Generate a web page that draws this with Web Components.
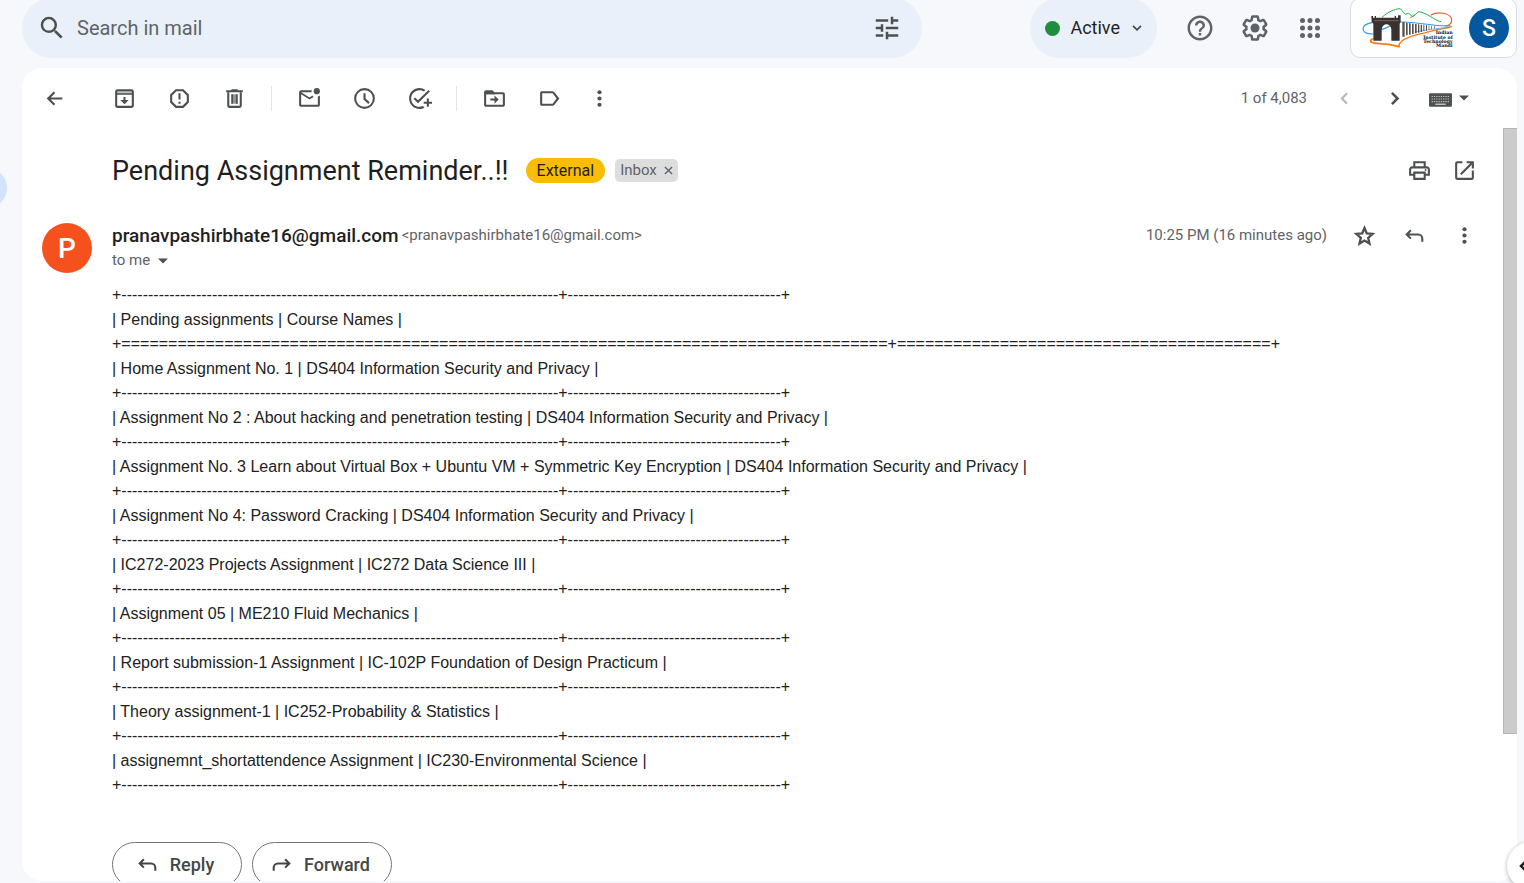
<!DOCTYPE html>
<html lang="en">
<head>
<meta charset="utf-8">
<meta name="viewport" content="width=device-width, initial-scale=1">
<title>Pending Assignment Reminder..!! - Mail</title>
<style>
  html, body { margin: 0; height: 100%; }
  body { background: #f6f8fc; font-family: Roboto, "Liberation Sans", sans-serif; color: #1f1f1f; overflow: hidden; }
</style>
</head>
<body>
<mail-app></mail-app>

<script>
const define = (name, html, setup) => {
  const template = document.createElement('template');
  template.innerHTML = html;
  customElements.define(name, class extends HTMLElement {
    connectedCallback() {
      if (this.shadowRoot) return;
      this.attachShadow({ mode: 'open' }).append(template.content.cloneNode(true));
      if (setup) setup(this, this.shadowRoot);
    }
  });
};

const ICONS = {
  search: '<path d="M15.5 14h-.79l-.28-.27A6.47 6.47 0 0 0 16 9.5 6.5 6.5 0 1 0 9.5 16c1.61 0 3.09-.59 4.23-1.57l.27.28v.79l5 4.99L20.49 19l-4.99-5zm-6 0C7.01 14 5 11.99 5 9.5S7.01 5 9.5 5 14 7.01 14 9.5 11.99 14 9.5 14z"/>',
  tune: '<path d="M3 17v2h6v-2H3zM3 5v2h10V5H3zm10 16v-2h8v-2h-8v-2h-2v6h2zM7 9v2H3v2h4v2h2V9H7zm14 4v-2H11v2h10zm-6-4h2V7h4V5h-4V3h-2v6z"/>',
  down: '<path d="M6 8.8 12 14.8 18 8.8" fill="none" stroke="currentColor" stroke-width="2.4"/>',
  help: '<path d="M11 18h2v-2h-2v2zm1-16C6.48 2 2 6.48 2 12s4.48 10 10 10 10-4.48 10-10S17.52 2 12 2zm0 18c-4.41 0-8-3.59-8-8s3.59-8 8-8 8 3.59 8 8-3.59 8-8 8zm0-14c-2.21 0-4 1.79-4 4h2c0-1.1.9-2 2-2s2 .9 2 2c0 2-3 1.75-3 5h2c0-2.25 3-2.5 3-5 0-2.21-1.79-4-4-4z"/>',
  settings: '<path d="M13.85 22.25h-3.7c-.74 0-1.36-.54-1.45-1.27l-.27-1.89c-.27-.14-.53-.29-.79-.46l-1.8.72c-.7.26-1.47-.03-1.81-.65L2.2 15.53c-.35-.66-.2-1.44.36-1.88l1.53-1.19c-.01-.15-.02-.3-.02-.46 0-.15.01-.31.02-.46l-1.52-1.19c-.59-.45-.74-1.26-.37-1.88l1.85-3.19c.34-.62 1.11-.9 1.79-.63l1.81.73c.26-.17.52-.32.78-.46l.27-1.91c.09-.7.71-1.25 1.44-1.25h3.7c.74 0 1.36.54 1.45 1.27l.27 1.89c.27.14.53.29.79.46l1.8-.72c.71-.26 1.48.03 1.82.65l1.84 3.18c.36.66.2 1.44-.36 1.88l-1.52 1.19c.01.15.02.3.02.46s-.01.31-.02.46l1.52 1.19c.56.45.72 1.23.37 1.86l-1.86 3.22c-.34.62-1.11.9-1.8.63l-1.8-.72c-.26.17-.52.32-.78.46l-.27 1.91c-.1.68-.72 1.22-1.46 1.22zm-3.23-2h2.76l.37-2.55.53-.22c.44-.18.88-.44 1.34-.78l.45-.34 2.38.96 1.38-2.4-2.03-1.58.07-.56c.03-.26.06-.51.06-.78s-.03-.53-.06-.78l-.07-.56 2.03-1.58-1.39-2.4-2.39.96-.45-.35c-.42-.32-.87-.58-1.33-.77l-.52-.22-.37-2.55h-2.76l-.37 2.55-.53.21c-.44.19-.88.44-1.34.79l-.45.33-2.38-.95-1.39 2.39 2.03 1.58-.07.56a7 7 0 0 0-.06.79c0 .26.02.53.06.78l.07.56-2.03 1.58 1.38 2.4 2.39-.96.45.35c.43.33.86.58 1.33.77l.53.22.38 2.55z"/><circle cx="12" cy="12" r="3.6"/>',
  apps: '<circle cx="6" cy="6" r="2"/><circle cx="12" cy="6" r="2"/><circle cx="18" cy="6" r="2"/><circle cx="6" cy="12" r="2"/><circle cx="12" cy="12" r="2"/><circle cx="18" cy="12" r="2"/><circle cx="6" cy="18" r="2"/><circle cx="12" cy="18" r="2"/><circle cx="18" cy="18" r="2"/>',
  back: '<path d="M19.5 11H8.4l4.3-4.3L11.3 5.2 4.500 12l6.800 6.800 1.400-1.500L8.400 13h11.100z"/>',
  archive: '<rect x="4" y="4" width="16" height="16" rx="1.5" fill="none" stroke="currentColor" stroke-width="2"/><path d="M4 4h16v4H4z" opacity=".35"/><path d="M4 7h16v1.500H4zM11 10.500h2v3h3L12 17.500 8 13.500h3z"/>',
  report: '<path d="M15.730 3H8.270L3 8.270v7.460L8.270 21h7.460L21 15.730V8.270L15.730 3zM19 14.900L14.900 19H9.100L5 14.900V9.100L9.100 5h5.800L19 9.100v5.800zM11 7h2v6h-2zM11 15h2v2h-2z"/>',
  trash: '<path d="M15 4V3H9v1H4v2h16V4z"/><path d="M6 6v12.500c0 .8.700 1.500 1.500 1.500h9c.8 0 1.500-.7 1.500-1.500V6" fill="none" stroke="currentColor" stroke-width="2"/><path d="M9 8h6v9H9z" opacity=".6"/><path d="M9 8h1.500v9H9zM13.500 8H15v9h-1.500z"/>',
  unread: '<path d="M20 10v8H4V8l8 5 4-2.500c-.5-.4-.9-.9-1.200-1.400L12 11 4 6h10c0-.7 0-1.400.2-2H4a2 2 0 0 0-2 2v12c0 1.100.9 2 2 2h16c1.100 0 2-.9 2-2V9.200c-.6.400-1.300.700-2 .8z"/><circle cx="19" cy="5" r="3"/>',
  clock: '<path d="M12 2a10 10 0 1 0 0 20 10 10 0 0 0 0-20zm0 18a8 8 0 1 1 0-16 8 8 0 0 1 0 16zM13 7h-2v6l4.700 4.200 1.300-1.500-4-3.600z"/>',
  task: '<path d="M22 5.180L10.590 16.600l-4.240-4.240 1.410-1.410 2.830 2.830 10-10L22 5.180zM12 20c-4.410 0-8-3.590-8-8s3.590-8 8-8c1.570 0 3.040.460 4.280 1.250l1.450-1.450A10.020 10.020 0 0 0 12 2C6.480 2 2 6.480 2 12s4.480 10 10 10c1.730 0 3.360-.440 4.780-1.220l-1.500-1.500c-1 .460-2.110.720-3.280.720zm7-5h-3v2h3v3h2v-3h3v-2h-3v-3h-2v3z"/>',
  move: '<path d="M20 6h-8l-2-2H4c-1.100 0-2 .9-2 2v12c0 1.100.9 2 2 2h16c1.100 0 2-.9 2-2V8c0-1.100-.9-2-2-2zm0 12H4V8h16v10zM12 17l4-4-4-4v3H8v2h4z"/><path d="M3 5h7l3 3H3z"/>',
  label: '<path d="M16.500 5.800C16.200 5.300 15.600 5 15 5H4.500C3.700 5 3 5.700 3 6.500v11c0 .8.700 1.500 1.500 1.500H15c.6 0 1.200-.3 1.500-.8L21.500 12zM15 17H5V7h10l3.800 5z"/>',
  more: '<circle cx="12" cy="6" r="2"/><circle cx="12" cy="12" r="2"/><circle cx="12" cy="18" r="2"/>',
  prev: '<path d="M14.500 7 9.500 12l5 5" fill="none" stroke="currentColor" stroke-width="2"/>',
  next: '<path d="M9.500 6.500 15 12l-5.500 5.500" fill="none" stroke="currentColor" stroke-width="2.400"/>',
  keyboard: '<rect x="1" y="7" width="22" height="13" rx="1"/><path d="M3.500 10h17M3.500 12.500h17M3.500 15h17" stroke="#fff" stroke-width="1" stroke-dasharray="1.200 1" opacity=".65"/><path d="M7 17.500h10" stroke="#fff" stroke-width="1.200" opacity=".75"/>',
  caret: '<path d="M6 9h12L12 15z"/>',
  print: '<path d="M19 8h-1V3H6v5H5c-1.660 0-3 1.340-3 3v6h4v4h12v-4h4v-6c0-1.660-1.340-3-3-3zM8 5h8v3H8V5zm8 14H8v-4h8v4zm4-4h-2v-2H6v2H4v-4c0-.550.450-1 1-1h14c.550 0 1 .450 1 1v4z"/><circle cx="17.800" cy="11.500" r=".9"/>',
  open: '<path d="M19 19H5V5h5V3H5a2 2 0 0 0-2 2v14a2 2 0 0 0 2 2h14c1.100 0 2-.9 2-2v-7h-2v7zM14 3v2h3.590l-9.830 9.830 1.410 1.410L19 6.410V10h2V3h-7z"/>',
  star: '<path d="m12 4.800 2.200 5.200 5.600.5-4.300 3.700 1.300 5.500L12 16.800l-4.800 2.900 1.300-5.500-4.300-3.700 5.600-.5z" fill="none" stroke="currentColor" stroke-width="2.200"/>',
  reply: '<path d="M8.500 7 4.500 11l4 4M5 11h10.500a4 4 0 0 1 4 4v3" fill="none" stroke="currentColor" stroke-width="2"/>',
  forward: '<path d="m15.500 7 4 4-4 4M19 11H8.500a4 4 0 0 0-4 4v3" fill="none" stroke="currentColor" stroke-width="2"/>'
};

define('mail-icon', `
  <style>
    :host { display: inline-flex; flex: none; width: var(--size, 25px); height: var(--size, 25px); }
    svg { width: 100%; height: 100%; fill: currentColor; display: block; }
  </style>
  <svg viewBox="0 0 24 24" aria-hidden="true"></svg>`,
  (host, root) => { root.querySelector('svg').innerHTML = ICONS[host.getAttribute('name')]; });

define('icon-button', `
  <style>
    :host { display: inline-flex; flex: none; color: #4d504f; }
    button { all: unset; display: inline-flex; cursor: pointer; }
  </style>
  <button type="button"></button>`,
  (host, root) => {
    root.querySelector('button').setAttribute('aria-label', host.getAttribute('label'));
    const icon = document.createElement('mail-icon');
    icon.setAttribute('name', host.getAttribute('icon'));
    root.querySelector('button').append(icon);
  });

define('search-bar', `
  <style>
    :host { display: block; min-width: 0; }
    form { box-sizing: border-box; height: 60px; padding: 0 20px 0 15px; display: flex; align-items: center; gap: 10px; border-radius: 30px; background: #e9f0fa; --size: 30px; }
    input { flex: 1; min-width: 0; border: 0; outline: 0; padding: 0; background: none; font: 20px/28px Roboto, sans-serif; color: #1f1f1f; }
    input::placeholder { color: #5f6368; opacity: 1; }
  </style>
  <form role="search" onsubmit="return false">
    <icon-button icon="search" label="Search"></icon-button>
    <input type="text" aria-label="Search in mail" placeholder="Search in mail">
    <icon-button icon="tune" label="Show search options"></icon-button>
  </form>`);

define('status-chip', `
  <style>
    :host { display: block; flex: none; }
    button { box-sizing: border-box; height: 60px; padding: 0 12px 0 15px; border: 0; border-radius: 30px; background: #e9f0fa; display: flex; align-items: center; font: 400 18px/24px Roboto, sans-serif; color: #1f1f1f; }
    i { width: 15px; height: 15px; border-radius: 50%; background: #1e8e3e; margin-right: 10px; }
    mail-icon { --size: 16px; margin-left: 9px; color: #444746; }
  </style>
  <button type="button"><i></i><slot></slot><mail-icon name="down"></mail-icon></button>`);

define('institute-logo', `
  <style>:host { display: block; } svg { display: block; width: 96px; height: 44px; } text { font: 900 14px "DejaVu Serif", serif; }</style>
  <svg viewBox="570 20 288 132" role="img" aria-label="Indian Institute of Technology Mandi">
    <g fill="none" stroke-linecap="round">
      <path d="M637 53C654 38 672 29 691 28L706 45 716 42 728 52 746 37C775 42 788 60 812 67" stroke="#27b24a" stroke-width="3"/>
      <path d="M722 54 735 47" stroke="#27b24a" stroke-width="3"/>
      <path d="M783 47C802 36 842 39 845 61 846 70 838 77 828 80" stroke="#f0592a" stroke-width="3.5"/>
      <path d="M606 70C571 76 569 104 608 104M693 68C740 66 800 84 840 79M634 91C650 86 655 82 665 78" stroke="#2a9df4" stroke-width="3.5"/>
      <path d="M607 119C596 126 602 131 620 132 645 133 670 137 688 142" stroke="#f57c13" stroke-width="5"/>
      <path d="M686 141C689 116 735 108 770 99 795 91 830 88 845 82" stroke="#f57c13" stroke-width="4"/>
      <path d="M735 98C770 92 805 86 838 84" stroke="#2a9df4" stroke-width="2"/>
    </g>
    <g fill="#3a322f">
      <path fill-rule="evenodd" d="M604 50h5v5h5v-5h4v5h56v-5h4v5h6v-7h8v21l-3 4v51h-25V90c-3-20-26-20-29 0v34h-25V73l-5-5z"/>
      <path d="M697 69h7v43h-7zM708 71h5v37h-5zM717 72h5v34h-5zM726 73h5v31h-5zM735 74h5v28h-5zM744 75h4v25h-4zM752 76h4v22h-4zM760 76h3v20h-3zM768 77h3v17h-3zM776 78h2v14h-2zM784 79h2v11h-2zM792 80h2v8h-2z" opacity=".85"/>
    </g>
    <path d="M612 64h74" stroke="#8d8581" stroke-width="2"/>
    <g fill="#111" text-anchor="end">
      <text x="848" y="105">Indian</text><text x="848" y="118">Institute of</text>
      <text x="848" y="130">Technology</text><text x="848" y="143">Mandi</text>
    </g>
  </svg>`);

define('user-avatar', `
  <style>
    :host { display: flex; flex: none; align-items: center; justify-content: center; border-radius: 50%; color: #fff; font-weight: 500; }
  </style><slot></slot>`);

define('top-bar', `
  <style>
    :host { display: flex; flex: none; align-items: flex-end; height: 58px; overflow: hidden; padding-right: 7px; }
    search-bar { flex: 0 1 900px; }
    status-chip { margin-left: auto; }
    .tools { display: flex; align-items: center; gap: 25px; height: 60px; padding: 0 25px 0 28px; --size: 30px; }
    .tools icon-button { color: #5f6368; }
    .account { box-sizing: border-box; height: 60px; flex: none; display: flex; align-items: center; gap: 13px; padding: 0 7px 0 9px; border: 1px solid #dadce0; border-radius: 10px; background: #fff; }
    user-avatar { width: 40px; height: 40px; background: #0458a0; font-size: 23px; }
  </style>
  <search-bar></search-bar>
  <status-chip>Active</status-chip>
  <div class="tools">
    <icon-button icon="help" label="Support"></icon-button>
    <icon-button icon="settings" label="Settings"></icon-button>
    <icon-button icon="apps" label="Apps"></icon-button>
  </div>
  <div class="account"><institute-logo></institute-logo><user-avatar>S</user-avatar></div>`);

define('message-toolbar', `
  <style>
    :host { display: flex; align-items: center; height: 60px; flex: none; padding: 0 43px 0 20px; }
    .group { display: flex; gap: 30px; }
    .first { margin-left: 45px; }
    .rule { width: 1px; height: 25px; margin: 0 25px 0 24px; background: #e3e5e8; }
    .last { margin-left: 25px; }
    .count { margin-left: auto; font-size: 15px; line-height: 24px; color: #5f6368; padding-right: 25px; }
    .pager { display: flex; gap: 25px; }
    .off { color: #b4b6b8; }
    .input { display: flex; align-items: center; gap: 1px; margin-left: 21px; }
    .input .caret { --size: 20px; }
  </style>
  <icon-button icon="back" label="Back to Inbox"></icon-button>
  <div class="group first">
    <icon-button icon="archive" label="Archive"></icon-button>
    <icon-button icon="report" label="Report spam"></icon-button>
    <icon-button icon="trash" label="Delete"></icon-button>
  </div>
  <div class="rule"></div>
  <div class="group">
    <icon-button icon="unread" label="Mark as unread"></icon-button>
    <icon-button icon="clock" label="Snooze"></icon-button>
    <icon-button icon="task" label="Add to Tasks"></icon-button>
  </div>
  <div class="rule"></div>
  <div class="group">
    <icon-button icon="move" label="Move to"></icon-button>
    <icon-button icon="label" label="Labels"></icon-button>
  </div>
  <icon-button class="last" icon="more" label="More"></icon-button>
  <div class="count">1 of 4,083</div>
  <div class="pager">
    <icon-button class="off" icon="prev" label="Newer"></icon-button>
    <icon-button icon="next" label="Older"></icon-button>
  </div>
  <div class="input">
    <icon-button icon="keyboard" label="Input tools"></icon-button>
    <icon-button class="caret" icon="caret" label="Select input tool"></icon-button>
  </div>`);

define('message-subject', `
  <style>
    :host { display: flex; align-items: center; height: 35px; padding-left: 70px; }
    h1 { margin: 0 17px 0 0; font-size: 27px; line-height: 36px; font-weight: 400; }
    .external { box-sizing: border-box; height: 25px; padding: 0 11px; border-radius: 13px; background: #fbbc04; font-size: 16px; line-height: 25px; }
    .inbox { display: flex; align-items: center; height: 23px; margin-left: 10px; padding: 0 5px; gap: 7px; border-radius: 5px; background: #ddd; color: #5f6368; font-size: 15px; line-height: 23px; }
    .inbox button { all: unset; display: flex; }
    .inbox svg { width: 9px; height: 9px; stroke: #5f6368; stroke-width: 1.5; }
    .actions { display: flex; gap: 20px; margin-left: auto; }
  </style>
  <h1><slot></slot></h1>
  <span class="external">External</span>
  <span class="inbox">Inbox<button type="button" aria-label="Remove label Inbox"><svg viewBox="0 0 10 10"><path d="m1 1 8 8M9 1 1 9"/></svg></button></span>
  <div class="actions">
    <icon-button icon="print" label="Print all"></icon-button>
    <icon-button icon="open" label="In new window"></icon-button>
  </div>`);

define('message-header', `
  <style>
    :host { display: flex; align-items: flex-start; }
    user-avatar { width: 50px; height: 50px; margin-right: 20px; background: #f4511e; font-size: 28px; }
    .sender { display: flex; align-items: center; gap: 3px; height: 25px; line-height: 25px; }
    b { font-size: 19px; font-weight: 500; }
    .address, .to, time { font-size: 15px; line-height: 25px; color: #5f6368; }
    .to { display: flex; align-items: center; height: 25px; gap: 3px; --size: 20px; }
    .meta { display: flex; align-items: center; height: 25px; gap: 25px; margin-left: auto; }
  </style>
  <user-avatar>P</user-avatar>
  <div>
    <div class="sender"><b>pranavpashirbhate16@gmail.com</b><span class="address">&lt;pranavpashirbhate16@gmail.com&gt;</span></div>
    <div class="to">to me <icon-button icon="caret" label="Show details"></icon-button></div>
  </div>
  <div class="meta">
    <time>10:25 PM (16 minutes ago)</time>
    <icon-button icon="star" label="Not starred"></icon-button>
    <icon-button icon="reply" label="Reply"></icon-button>
    <icon-button icon="more" label="More"></icon-button>
  </div>`);

define('message-body', `
  <style>
    :host { display: block; padding: 10px 0 45px 70px; font: 16px/24px "Liberation Sans", Arial, sans-serif; color: #222; white-space: nowrap; }
    .row { line-height: 25px; }
  </style>`,
  (host, root) => {
    const line = (text, name) => {
      const div = document.createElement('div');
      div.className = name;
      div.textContent = text;
      root.append(div);
    };
    const rule = mark => line('+' + mark.repeat(82) + '+' + mark.repeat(40) + '+', 'rule');
    rule('-');
    [
      ['Pending assignments', 'Course Names'],
      ['Home Assignment No. 1', 'DS404 Information Security and Privacy'],
      ['Assignment No 2 : About hacking and penetration testing', 'DS404 Information Security and Privacy'],
      ['Assignment No. 3 Learn about Virtual Box + Ubuntu VM + Symmetric Key Encryption', 'DS404 Information Security and Privacy'],
      ['Assignment No 4: Password Cracking', 'DS404 Information Security and Privacy'],
      ['IC272-2023 Projects Assignment', 'IC272 Data Science III'],
      ['Assignment 05', 'ME210 Fluid Mechanics'],
      ['Report submission-1 Assignment', 'IC-102P Foundation of Design Practicum'],
      ['Theory assignment-1', 'IC252-Probability & Statistics'],
      ['assignemnt_shortattendence Assignment', 'IC230-Environmental Science']
    ].forEach((cells, i) => {
      line('| ' + cells.join(' | ') + ' |', 'row');
      rule(i ? '-' : '=');
    });
  });

define('pill-button', `
  <style>
    :host { display: block; }
    button { box-sizing: border-box; width: 100%; height: 45px; padding: 0 5px 0 0; display: flex; align-items: center; justify-content: center; gap: 10px; border: 1px solid #747775; border-radius: 23px; background: #fff; font: 500 18px/24px Roboto, sans-serif; color: #444746; }
  </style>
  <button type="button"><slot></slot></button>`,
  (host, root) => {
    const icon = document.createElement('mail-icon');
    icon.setAttribute('name', host.getAttribute('icon'));
    root.querySelector('button').prepend(icon);
  });

define('message-card', `
  <style>
    :host { display: flex; flex-direction: column; flex: 1; min-height: 0; margin: 10px 7px 2px 0; border-radius: 20px; background: #fff; overflow: hidden; }
    .view { flex: 1; min-height: 0; display: flex; }
    article { flex: 1; min-width: 0; overflow: hidden; padding: 25px 26px 0 20px; }
    message-header { margin-top: 35px; }
    .replies { display: flex; gap: 10px; padding-left: 70px; }
    .reply { width: 130px; } .forward { width: 140px; }
    .track { width: 14px; flex: none; }
    .thumb { box-sizing: border-box; height: 80.5%; background: #cbcbcb; border: 1px solid #b5b5b5; border-right: 0; }
  </style>
  <message-toolbar></message-toolbar>
  <div class="view">
    <article>
      <message-subject>Pending Assignment Reminder..!!</message-subject>
      <message-header></message-header>
      <message-body></message-body>
      <div class="replies">
        <pill-button class="reply" icon="reply">Reply</pill-button>
        <pill-button class="forward" icon="forward">Forward</pill-button>
      </div>
    </article>
    <div class="track"><div class="thumb"></div></div>
  </div>`);

define('nav-rail', `
  <style>
    :host { display: block; flex: none; width: 22px; padding-top: 168px; overflow: hidden; box-sizing: border-box; }
    div { width: 40px; height: 40px; margin-left: -33px; border-radius: 20px; background: #d3e3fd; }
  </style><div></div>`);

define('mail-app', `
  <style>
    :host { display: flex; height: 100vh; overflow: hidden; position: relative; }
    main { flex: 1; min-width: 0; display: flex; flex-direction: column; }
    .panel { all: unset; position: absolute; right: -31px; bottom: -7px; width: 48px; height: 48px; border-radius: 50%; background: #fff; box-shadow: 0 1px 4px rgba(60,64,67,.4); display: flex; align-items: center; color: #1f1f1f; }
    .panel svg { width: 8px; height: 12px; margin-left: 12px; }
  </style>
  <nav-rail></nav-rail>
  <main><top-bar></top-bar><message-card></message-card></main>
  <button class="panel" type="button" aria-label="Show side panel"><svg viewBox="0 0 8 12"><path d="M7 1 2 6l5 5" fill="none" stroke="currentColor" stroke-width="2.5"/></svg></button>`);
</script>
</body>
</html>
